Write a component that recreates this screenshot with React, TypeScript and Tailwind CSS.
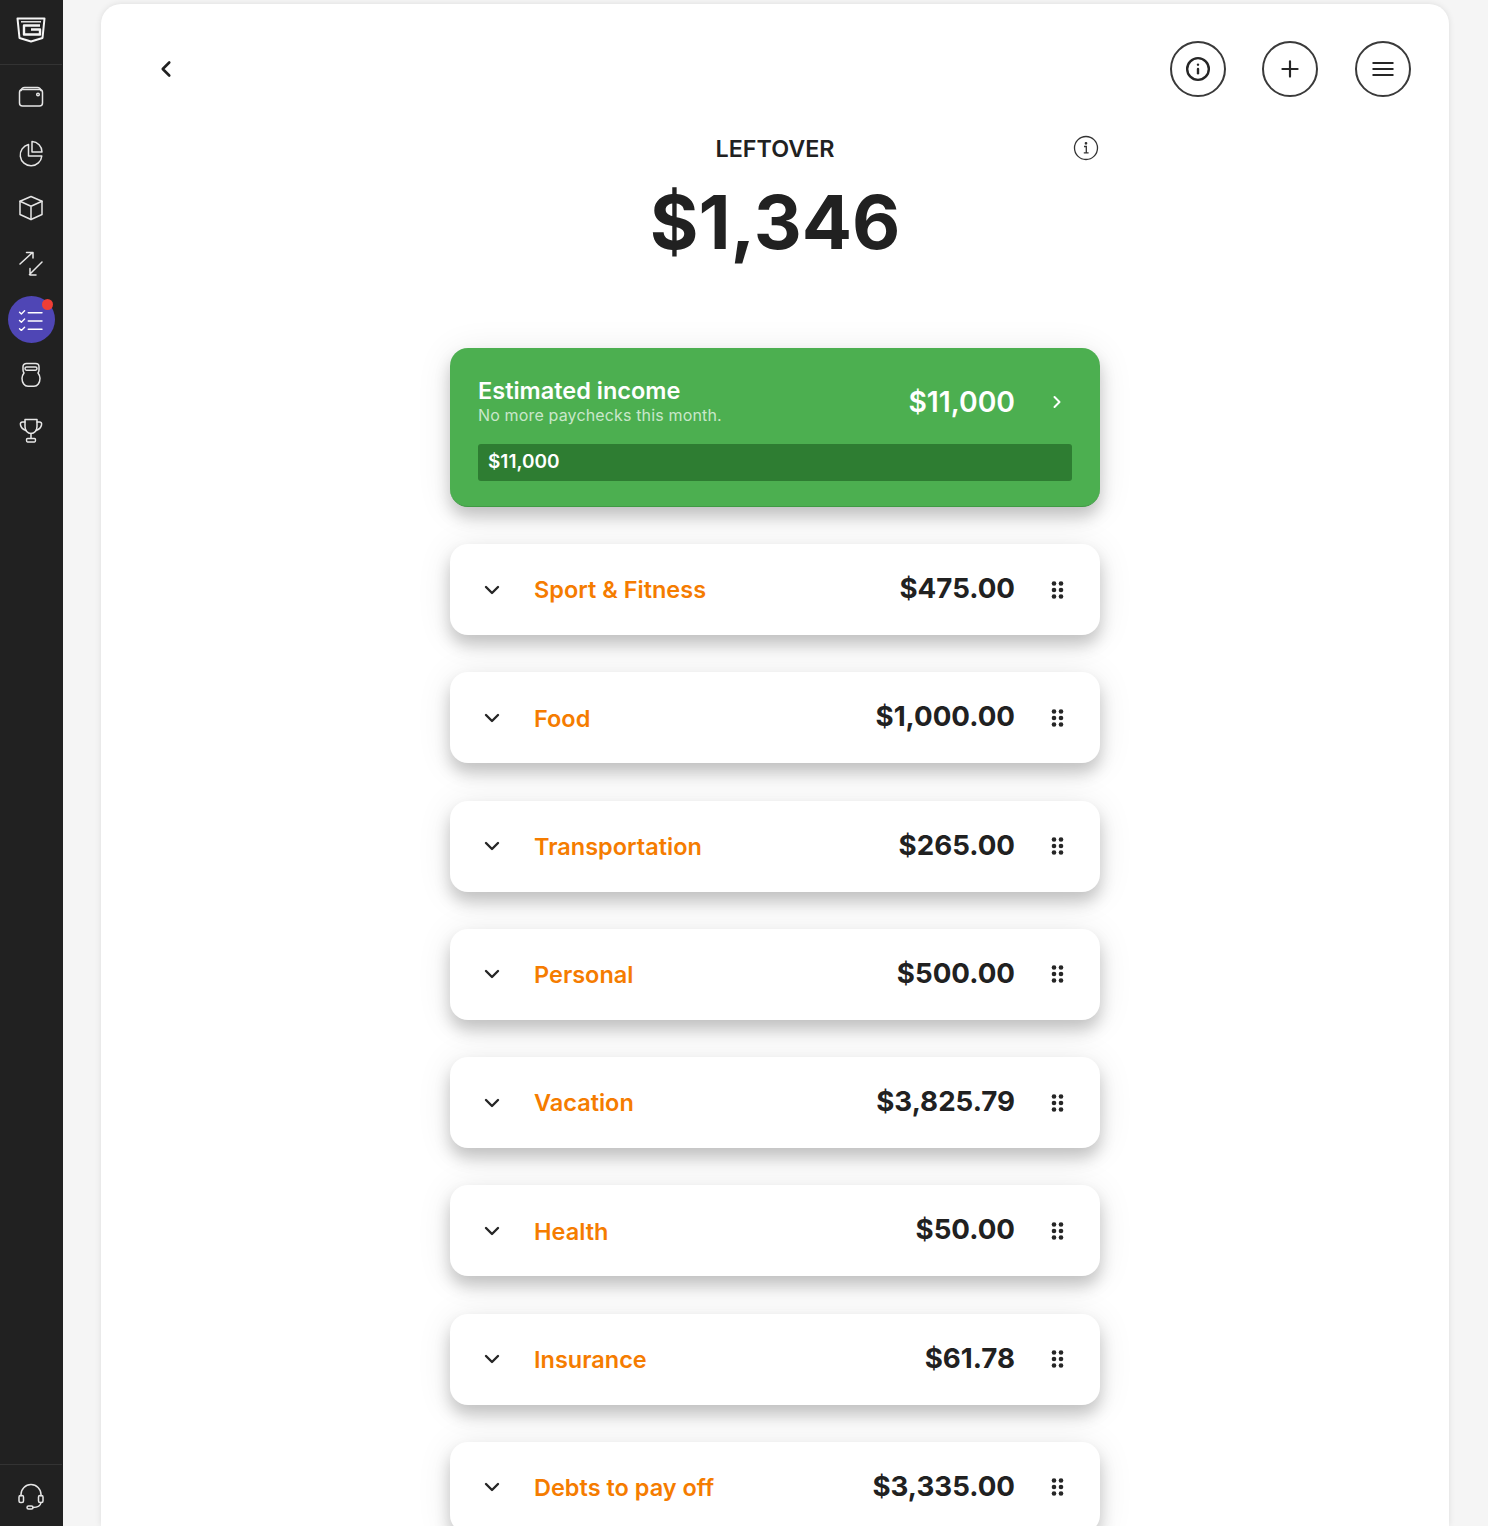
import { ChevronDown, ChevronLeft, ChevronRight, Info, Plus } from 'lucide-react';

const categories = [
  { name: 'Sport & Fitness', amount: '$475.00' },
  { name: 'Food', amount: '$1,000.00' },
  { name: 'Transportation', amount: '$265.00' },
  { name: 'Personal', amount: '$500.00' },
  { name: 'Vacation', amount: '$3,825.79' },
  { name: 'Health', amount: '$50.00' },
  { name: 'Insurance', amount: '$61.78' },
  { name: 'Debts to pay off', amount: '$3,335.00' },
];

const cardShadow = 'shadow-[0_10px_16px_rgba(0,0,0,0.2),0_4px_36px_rgba(0,0,0,0.09)]';

const NavIcon = ({ children }: { children: React.ReactNode }) => (
  <svg viewBox="0 0 28 28" className="w-7 h-7" fill="none" stroke="#e6e6e6" strokeWidth="1.5" strokeLinecap="round" strokeLinejoin="round">
    {children}
  </svg>
);

const DotsIcon = () => (
  <svg viewBox="0 0 14 20" className="w-[14px] h-5" fill="#262626">
    <circle cx="3" cy="3.5" r="2.3" />
    <circle cx="10" cy="3.5" r="2.3" />
    <circle cx="3" cy="10" r="2.3" />
    <circle cx="10" cy="10" r="2.3" />
    <circle cx="3" cy="16.5" r="2.3" />
    <circle cx="10" cy="16.5" r="2.3" />
  </svg>
);

const Sidebar = () => (
  <aside className="w-[63px] shrink-0 bg-[#212121] flex flex-col items-center pr-px">
    <div className="h-[65px] w-full flex items-center justify-center border-b border-[#333333] pb-[5px]">
      <svg viewBox="0 0 30 26" className="w-[30px] h-[26px]" fill="none" stroke="#f5f5f5" strokeLinejoin="round">
        <path d="M1.500 1.500h27l-2 19.500L15 24.500 3.500 21z" strokeWidth="2" />
        <path d="M5 4.800h20" strokeWidth="1.400" />
        <path d="M24 8.500H8v9h16v-5h-9" strokeWidth="2.400" />
      </svg>
    </div>
    <nav className="flex-1 flex flex-col items-center pt-[18px] gap-[27.700px]">
      <NavIcon>
        <rect x="2.500" y="6.500" width="23" height="16.500" rx="3" />
        <path d="M4 7.500c.5-2 1.800-3 3.500-3h13c1.800 0 3 1 3.500 3" />
        <circle cx="21" cy="11.500" r="1.300" />
      </NavIcon>
      <NavIcon>
        <path d="M11.500 5.500A10.800 10.800 0 1 0 24.800 17H11.500z" />
        <path d="M15 2.500A10.500 10.500 0 0 1 25 13H15z" />
      </NavIcon>
      <NavIcon>
        <path d="M14 2.500l11 4.800v13.200L14 25.500 3 20.500V7.300z" />
        <path d="M3 7.300l11 5 11-5M14 12.300v13.200" />
      </NavIcon>
      <NavIcon>
        <path d="M3 14L15.500 2.500M9.500 2.500h6.500v5.500M25 12L12.500 24.500M13 18.500v6.500h6" />
      </NavIcon>
      <div className="relative w-[47px] h-[47px] -my-[9.500px] rounded-full bg-[#4f46b5] flex items-center justify-center">
        <svg viewBox="0 0 28 24" className="w-[26px] h-[22px]" fill="none" stroke="#ffffff" strokeWidth="1.500" strokeLinecap="round" strokeLinejoin="round">
          <path d="M1.500 3.500l2 2 3.500-3.500M1.500 12.500l2 2 3.500-3.500M1.500 21.500l2 2 3.500-3.500" />
          <path d="M11 4h15M11 13h15M11 22h15" strokeWidth="1.600" />
        </svg>
        <span className="absolute top-[3px] right-[2px] w-[11px] h-[11px] rounded-full bg-[#ef3e36]" />
      </div>
      <NavIcon>
        <path d="M9.500 2.500h9c2 0 3.500 1.200 3.500 3.200v3.300c0 1-.3 2-1 3 1.300 1.700 2 3.200 2 5.300 0 4.500-2.500 8-6 8h-6c-3.500 0-6-3.500-6-8 0-2.100.7-3.600 2-5.300-.7-1-1-2-1-3V5.700c0-2 1.500-3.200 3.500-3.200z" />
        <path d="M9.500 6h9c1 0 1.500.6 1.500 1.600s-.5 1.600-1.500 1.600h-9C8.500 9.200 8 8.600 8 7.600S8.500 6 9.500 6z" />
      </NavIcon>
      <NavIcon>
        <path d="M8 2.500h12v7c0 4-2.500 7-6 7s-6-3-6-7z" />
        <path d="M8 5H5.500C4 5 3 6 3.500 8c.5 2.500 2.500 4.500 5.500 5.500M20 5h2.500c1.500 0 2.500 1 2 3-.5 2.500-2.500 4.500-5.500 5.500" />
        <path d="M14 16.500v5M10.500 21.500h7c.8 0 1 .5 1 1.500s-.2 2-1 2h-7c-.8 0-1-1-1-2s.2-1.500 1-1.500z" />
      </NavIcon>
    </nav>
    <div className="h-[62px] w-full border-t border-[#333333] flex items-center justify-center">
      <NavIcon>
        <path d="M4 14V12.500a10 10 0 0 1 20 0V14" />
        <rect x="2" y="13.500" width="4.500" height="7" rx="1.500" />
        <rect x="21.500" y="13.500" width="4.500" height="7" rx="1.500" />
        <path d="M24 20.500c-.5 3-3.500 5-8 5" />
        <rect x="10" y="24" width="6" height="3" rx="1.500" />
      </NavIcon>
    </div>
  </aside>
);

const IncomeCard = () => (
  <div className={`h-[159px] rounded-[18px] bg-[#4caf50] border-b border-[#3f9a43] px-[28px] pt-[27px] ${cardShadow}`}>
    <div className="flex justify-between">
      <div>
        <div className="text-[23.500px] leading-[31px] font-semibold text-white">Estimated income</div>
        <div className="text-[16px] leading-[18px] tracking-[0.15px] text-[#c9e7ca]">No more paychecks this month.</div>
      </div>
      <div className="flex items-center pt-[5px]">
        <span className="text-[28.300px] font-semibold text-white leading-none">$11,000</span>
        <ChevronRight className="w-[20px] h-[20px] text-white ml-[32px] mr-[5px]" strokeWidth={2.4} />
      </div>
    </div>
    <div className="mt-[20px] h-[37px] rounded-[3px] bg-[#2e7d32] flex items-center px-[10px] text-[19px] font-semibold text-white">
      $11,000
    </div>
  </div>
);

const CategoryRow = ({ name, amount }: { name: string; amount: string }) => (
  <div className={`h-[91px] rounded-[18px] bg-white flex items-center pl-[30px] pr-[35px] ${cardShadow}`}>
    <ChevronDown className="w-[24px] h-[24px] text-[#262626]" strokeWidth={2.4} />
    <span className="ml-[30px] mt-[1px] text-[23.500px] font-semibold text-[#f57c00]">{name}</span>
    <span className="ml-auto text-[27.700px] font-bold text-[#212121] -mt-[1px]">{amount}</span>
    <span className="ml-[36px] flex"><DotsIcon /></span>
  </div>
);

const CircleButton = ({ children, className }: { children: React.ReactNode; className?: string }) => (
  <button type="button" className={`w-[56px] h-[56px] rounded-full border-2 border-[#3a3a3a] flex items-center justify-center text-[#262626] ${className ?? ''}`}>
    {children}
  </button>
);

export default function App() {
  return (
    <div className="flex h-[1526px] overflow-hidden bg-[#f5f5f5] font-['Inter',sans-serif] text-[#212121]">
      <Sidebar />
      <main className="w-[1348px] ml-[38px] mt-[4px] bg-white rounded-t-[20px] shadow-[0_0_6px_rgba(0,0,0,0.1)] relative">
        <div className="flex items-center justify-between pt-[37px] pl-[52px] pr-[38px]">
          <ChevronLeft className="w-[26px] h-[26px] text-[#212121]" strokeWidth={2.4} />
          <div className="flex">
            <CircleButton><Info className="w-[26px] h-[26px]" strokeWidth={2.2} /></CircleButton>
            <CircleButton className="ml-[36px]"><Plus className="w-[26px] h-[26px]" strokeWidth={2} /></CircleButton>
            <CircleButton className="ml-[37px]">
              <svg viewBox="0 0 22 18" className="w-[22px] h-[18px]" fill="none" stroke="#262626" strokeWidth="2.200">
                <path d="M0.500 3h21M0.500 9h21M0.500 15h21" />
              </svg>
            </CircleButton>
          </div>
        </div>
        <div className="w-[650px] ml-[349px] -mt-[1px]">
          <div className="relative text-center mt-[38px] h-[30px] text-[23.300px] leading-[30px] font-semibold">
            LEFTOVER
            <span className="absolute right-px top-[1px] w-[26px] h-[26px] rounded-full">
              <svg viewBox="0 0 26 26" className="w-[26px] h-[26px]" fill="none" stroke="#333333" strokeWidth="1.300">
                <circle cx="13" cy="13" r="11.500" />
                <path d="M11 11.500h2.300v6M10.800 17.800h4.800" />
                <circle cx="13" cy="8.300" r="0.700" fill="#333333" />
              </svg>
            </span>
          </div>
          <div className="text-center text-[74.400px] leading-[90px] font-bold mt-[13px]">$1,346</div>
          <div className="mt-[81px]"><IncomeCard /></div>
          <div className="mt-[37px] flex flex-col gap-[37.250px]">
            {categories.map((c) => (
              <CategoryRow key={c.name} name={c.name} amount={c.amount} />
            ))}
          </div>
        </div>
      </main>
    </div>
  );
}
